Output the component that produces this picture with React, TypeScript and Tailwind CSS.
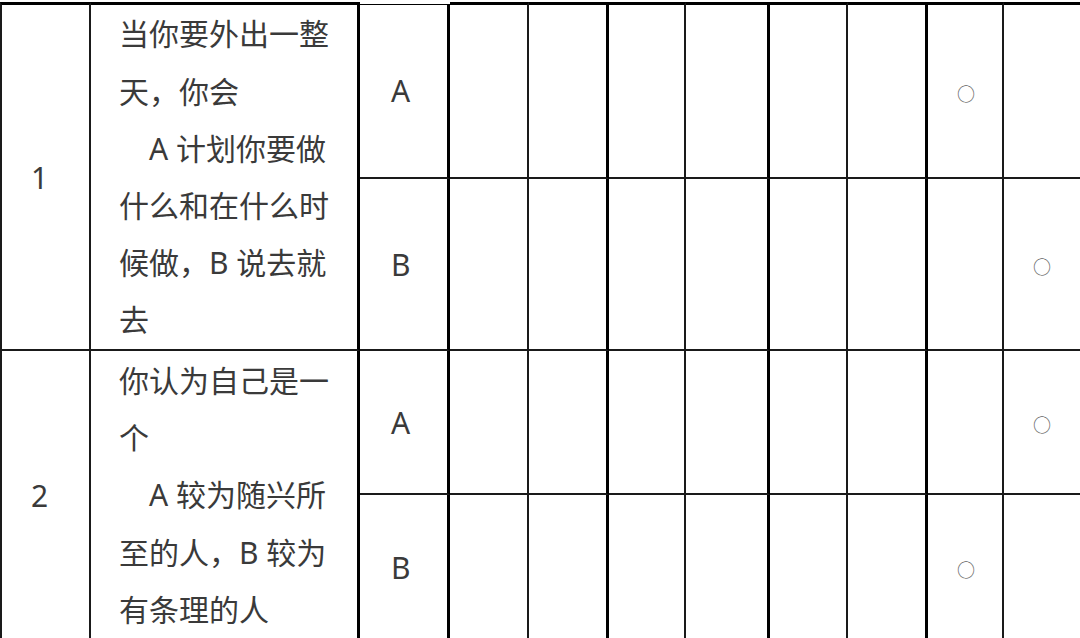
const answerCols = [
  // right-border class for each of the 8 answer columns (thin / thick alternating)
  'border-r-2 border-r-[#1a1a1a]',
  'border-r-[3px] border-r-black',
  'border-r-2 border-r-[#1a1a1a]',
  'border-r-[3px] border-r-black',
  'border-r-2 border-r-[#1a1a1a]',
  'border-r-[3px] border-r-black',
  'border-r-2 border-r-[#1a1a1a]',
  'border-r-2 border-r-[#1a1a1a]',
];

interface Question {
  no: string;
  lines: string[];
  // index of answer column that holds the mark, for option A and option B
  marks: [number, number];
}

const questions: Question[] = [
  {
    no: '1',
    lines: ['当你要外出一整', '天，你会', '\u3000A 计划你要做', '什么和在什么时', '候做，B 说去就', '去'],
    marks: [6, 7],
  },
  {
    no: '2',
    lines: ['你认为自己是一', '个', '\u3000A 较为随兴所', '至的人，B 较为', '有条理的人'],
    marks: [7, 6],
  },
];

function Mark() {
  return <span className="text-[18px] leading-none text-[#666] translate-y-[3px]">○</span>;
}

export default function App() {
  return (
    <div className="w-[1080px] h-[638px] overflow-hidden bg-white font-['Noto_Sans','Noto_Sans_CJK_SC',sans-serif] text-[30px] text-[#3a3a3a]">
      <div className="mt-[2px] w-[1082px] grid grid-cols-[91px_269px_90px_79px_80px_77px_84px_78px_80px_76px_78px] grid-rows-[177px_172px_144px_146px]">
        {questions.map((q, qi) => {
          const first = qi === 0;
          const top = first ? 'border-t-[3px] border-t-black' : '';
          return [
            <div
              key={`no-${qi}`}
              className={`row-span-2 flex items-center pl-[29px] border-l-2 border-l-[#1a1a1a] border-r-2 border-r-[#1a1a1a] border-b-2 border-b-[#1a1a1a] ${top}`}
            >
              {q.no}
            </div>,
            <div
              key={`q-${qi}`}
              className={`row-span-2 flex flex-col justify-center pl-[28px] leading-[57.2px] border-r-[3px] border-r-black border-b-2 border-b-[#1a1a1a] ${top}`}
            >
              {q.lines.map((l, li) => (
                <span key={li} className="whitespace-pre">{l}</span>
              ))}
            </div>,
            ...['A', 'B'].flatMap((opt, oi) => {
              const rowTop = first && oi === 0;
              return [
                <div
                  key={`opt-${qi}-${oi}`}
                  className={`flex items-center pl-[31px] border-r-[3px] border-r-black border-b-2 border-b-[#1a1a1a] ${rowTop ? 'border-t-[1.5px] border-t-black mt-[1.5px]' : ''}`}
                >
                  {opt}
                </div>,
                ...answerCols.map((cls, ci) => (
                  <div
                    key={`a-${qi}-${oi}-${ci}`}
                    className={`flex items-center pl-[29px] border-b-2 border-b-[#1a1a1a] ${cls} ${rowTop ? 'border-t-[3px] border-t-black' : ''}`}
                  >
                    {q.marks[oi] === ci && <Mark />}
                  </div>
                )),
              ];
            }),
          ];
        })}
      </div>
    </div>
  );
}
